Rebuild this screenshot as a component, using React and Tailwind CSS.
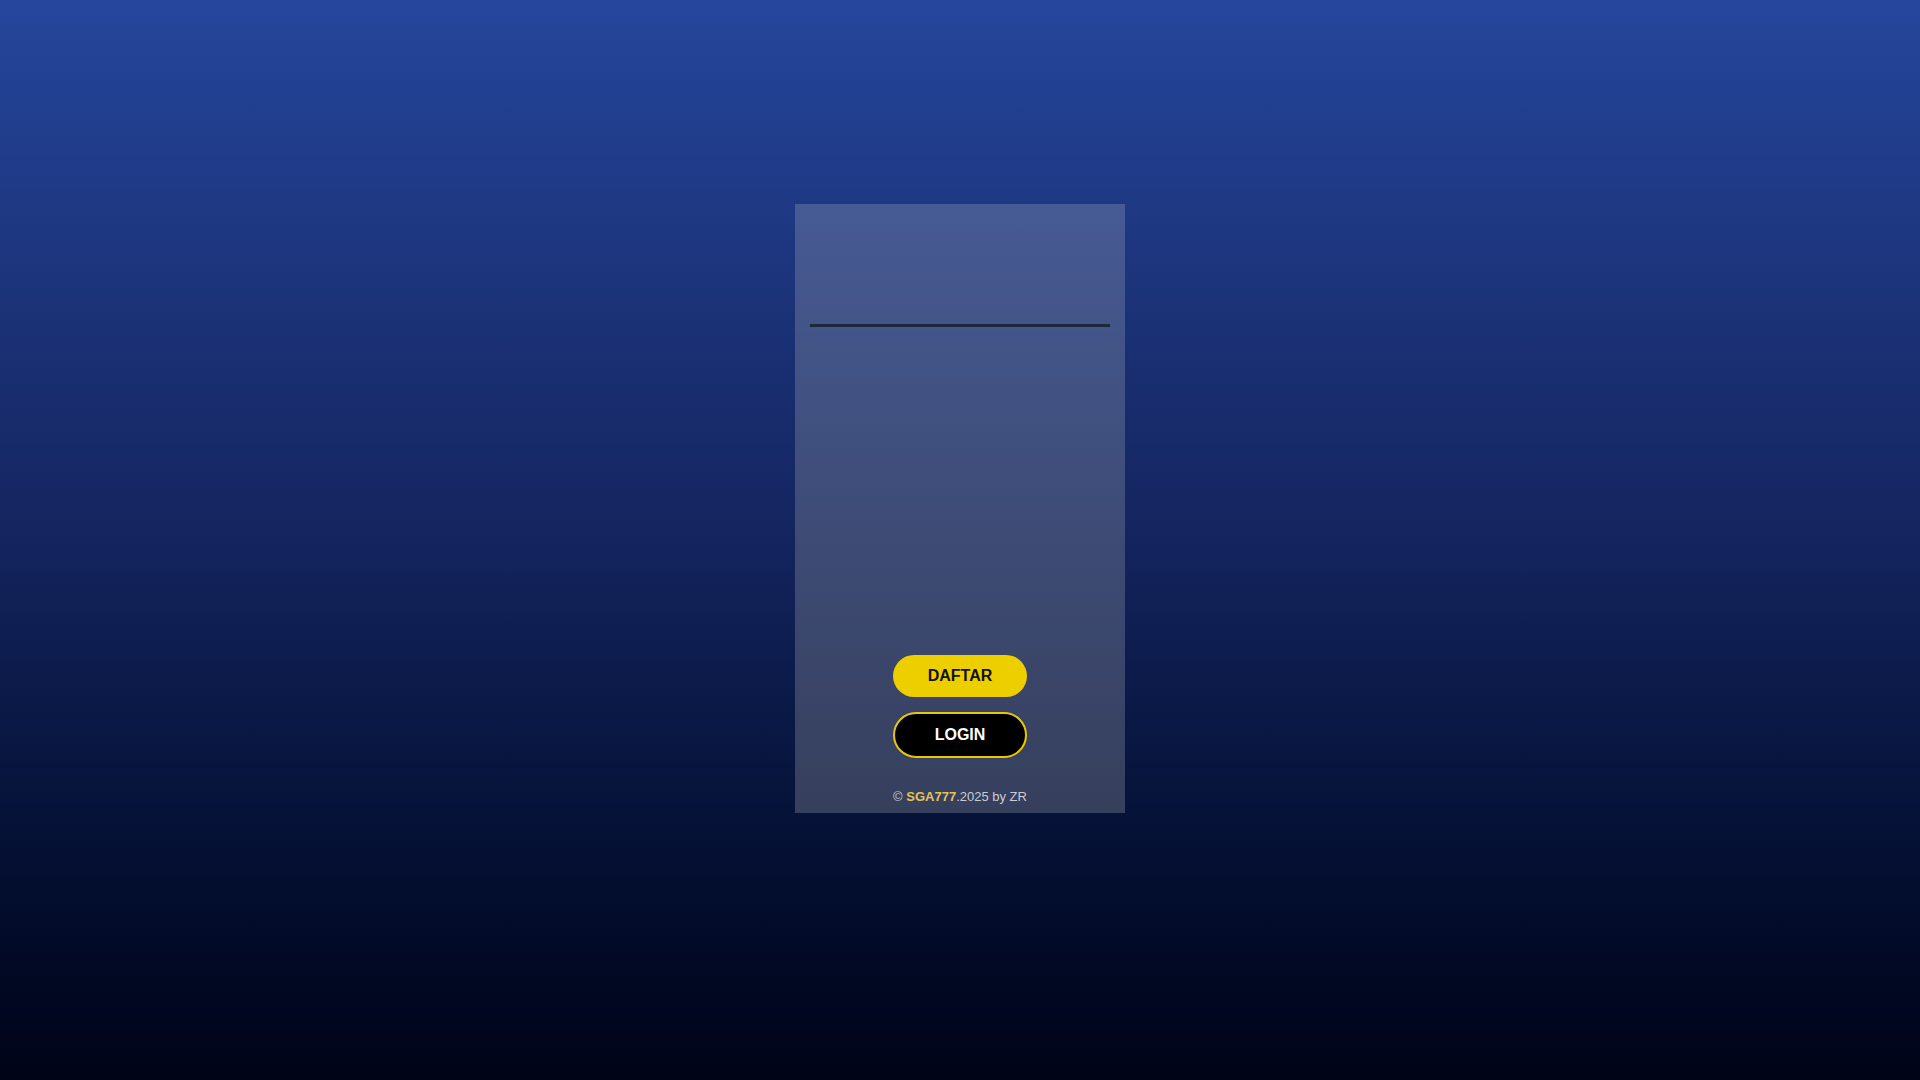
export default function App() {
  return (
    <div className="min-h-screen w-full bg-gradient-to-b from-[#25469c] via-[#14245e] to-[#000417] font-['Liberation_Sans',Arial,sans-serif]">
      <div className="flex justify-center pt-[204px] pb-[267px]">
        <div className="w-[330px] h-[609px] bg-gradient-to-b from-[#465a94] to-[#363f5c] flex flex-col px-[15px]">
          {/* header */}
          <div className="h-[123px] border-b-[3px] border-[#1b2a3b]" />

          <div className="flex-1" />

          {/* actions */}
          <div className="flex flex-col items-center gap-[15px]">
            <button className="w-[134px] h-[42px] rounded-full bg-[#edcf00] text-[#111] font-bold text-[16px]">
              DAFTAR
            </button>
            <button className="w-[134px] h-[46px] rounded-full bg-black border-2 border-[#e8c800] text-white font-bold text-[16px]">
              LOGIN
            </button>
          </div>

          <p className="mt-[31px] mb-[8px] text-center text-[13px] text-[#c9ccd6] leading-[16px]">
            © <span className="font-bold text-[#e3c35a]">SGA777</span>.2025 by ZR
          </p>
        </div>
      </div>
    </div>
  )
}
